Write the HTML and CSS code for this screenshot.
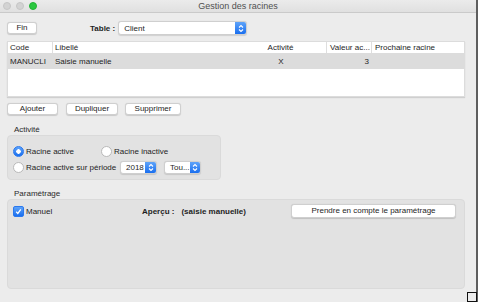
FILE: index.html
```html
<!DOCTYPE html>
<html lang="fr">
<head>
    <meta charset="UTF-8">
    <title>Gestion des racines</title>
    <link rel="stylesheet" href="styles.css">
</head>
<body>
    <div class="window">
        <div class="titlebar">
            <div class="lights">
                <span class="light"></span>
                <span class="light"></span>
                <span class="light green"></span>
            </div>
            <div class="title">Gestion des racines</div>
            <div></div>
        </div>

        <div class="content">
            <div class="toolbar">
                <button class="btn btn-fin">Fin</button>
                <span class="table-label">Table :</span>
                <div class="select select-table">
                    <span class="select-text">Client</span>
                    <span class="stepper">
                        <svg width="6" height="9" viewBox="0 0 6 9"><path d="M1 3.5 L3 1.5 L5 3.5 M1 5.5 L3 7.5 L5 5.5" fill="none" stroke="#fff" stroke-width="1.1"/></svg>
                    </span>
                </div>
            </div>

            <div class="grid">
                <div class="grid-row grid-head">
                    <div class="cell sep">Code</div>
                    <div class="cell">Libellé</div>
                    <div class="cell center sep">Activité</div>
                    <div class="cell sep">Valeur ac...</div>
                    <div class="cell">Prochaine racine</div>
                </div>
                <div class="grid-row grid-line selected">
                    <div class="cell">MANUCLI</div>
                    <div class="cell">Saisie manuelle</div>
                    <div class="cell center">X</div>
                    <div class="cell right">3</div>
                    <div class="cell"></div>
                </div>
            </div>

            <div class="actions">
                <button class="btn btn-add">Ajouter</button>
                <button class="btn btn-dup">Dupliquer</button>
                <button class="btn btn-del">Supprimer</button>
            </div>

            <div class="group-label">Activité</div>
            <div class="group group-activite">
                <div class="radio-row">
                    <label class="radio-item first">
                        <span class="radio checked"></span>
                        <span>Racine active</span>
                    </label>
                    <label class="radio-item">
                        <span class="radio"></span>
                        <span>Racine inactive</span>
                    </label>
                </div>
                <div class="radio-row">
                    <label class="radio-item period">
                        <span class="radio"></span>
                        <span>Racine active sur période</span>
                    </label>
                    <div class="select select-small">
                        <span class="select-text">2018</span>
                        <span class="stepper">
                            <svg width="6" height="9" viewBox="0 0 6 9"><path d="M1 3.5 L3 1.5 L5 3.5 M1 5.5 L3 7.5 L5 5.5" fill="none" stroke="#fff" stroke-width="1.1"/></svg>
                        </span>
                    </div>
                    <div class="select select-small">
                        <span class="select-text">Tou...</span>
                        <span class="stepper">
                            <svg width="6" height="9" viewBox="0 0 6 9"><path d="M1 3.5 L3 1.5 L5 3.5 M1 5.5 L3 7.5 L5 5.5" fill="none" stroke="#fff" stroke-width="1.1"/></svg>
                        </span>
                    </div>
                </div>
            </div>

            <div class="group-label">Paramétrage</div>
            <div class="group group-param">
                <div class="param-row">
                    <label class="check-item">
                        <span class="checkbox">
                            <svg width="9" height="9" viewBox="0 0 9 9"><path d="M2.2 4.8 L3.8 6.4 L6.8 2.4" fill="none" stroke="#fff" stroke-width="1.3"/></svg>
                        </span>
                        <span>Manuel</span>
                    </label>
                    <span class="bold">Aperçu :</span>
                    <span class="bold preview">(saisie manuelle)</span>
                    <button class="btn btn-apply">Prendre en compte le paramétrage</button>
                </div>
            </div>
        </div>

        <div class="resize-box"></div>
    </div>
</body>
</html>
```

FILE: styles.css
```css
body {
    margin: 0;
    font-family: "Liberation Sans", Arial, sans-serif;
    font-size: 8px;
    color: #1e1e1e;
    background: #ffffff;
}
.window {
    position: relative;
    width: 476px;
    height: 302px;
    background: #ececec;
    border-right: 2px solid #5e5e5e;
}
.titlebar {
    height: 12px;
    display: grid;
    grid-template-columns: 1fr auto 1fr;
    align-items: center;
    background: linear-gradient(#ebebeb, #e0e0e0);
    border-bottom: 1px solid #cacaca;
}
.lights {
    display: flex;
    gap: 5px;
    padding-left: 3px;
}
.light {
    width: 8px;
    height: 8px;
    border-radius: 50%;
    background: #d3d3d3;
    box-sizing: border-box;
    border: 1px solid #c6c6c6;
}
.light.green {
    background: #2bc840;
    border-color: #22b335;
}
.title {
    font-size: 9px;
    color: #505050;
}
.content {
    padding: 8px 11px 0 7px;
}
.toolbar {
    display: flex;
    align-items: center;
    height: 14px;
}
.btn {
    font-family: "Liberation Sans", Arial, sans-serif;
    font-size: 8px;
    color: #1e1e1e;
    height: 12px;
    padding: 0;
    background: #ffffff;
    border: 1px solid #cfcfcf;
    border-radius: 3px;
    box-shadow: 0 0.5px 1px rgba(0, 0, 0, 0.15);
    line-height: 10px;
}
.btn-fin {
    width: 30px;
}
.table-label {
    font-weight: bold;
    margin-left: 53px;
    margin-right: 3px;
}
.select {
    display: flex;
    align-items: center;
    box-sizing: border-box;
    background: #ffffff;
    border: 1px solid #cfcfcf;
    border-radius: 3px;
    box-shadow: 0 0.5px 1px rgba(0, 0, 0, 0.12);
    overflow: hidden;
}
.select-text {
    flex: 1;
    padding-left: 5px;
}
.stepper {
    display: flex;
    align-items: center;
    justify-content: center;
    width: 11px;
    align-self: stretch;
    background: linear-gradient(#5ea3f9, #1a6fef);
}
.select-table {
    width: 129px;
    height: 14px;
}
.grid {
    margin-top: 6px;
    height: 56px;
    box-sizing: border-box;
    background: #ffffff;
    border: 1px solid #dcdcdc;
    box-shadow: 0 1px 1px rgba(0, 0, 0, 0.12);
}
.grid-row {
    display: grid;
    grid-template-columns: 45px 183px 91px 45px 1fr;
    align-items: center;
}
.grid-head {
    height: 11px;
}
.grid-line {
    height: 16px;
}
.selected {
    background: #dcdcdc;
}
.cell {
    padding: 0 3px 0 2px;
    white-space: nowrap;
    overflow: hidden;
    height: 100%;
    display: flex;
    align-items: center;
}
.grid-head .cell:nth-child(4),
.grid-head .cell:nth-child(5) {
    padding-left: 3px;
}
.sep {
    border-right: 1px solid #dedede;
}
.center {
    justify-content: center;
}
.right {
    justify-content: flex-end;
}
.actions {
    display: flex;
    margin-top: 6px;
}
.btn-add {
    width: 51px;
}
.btn-dup {
    width: 52px;
    margin-left: 8px;
}
.btn-del {
    width: 56px;
    margin-left: 7px;
}
.group-label {
    padding-left: 7px;
    height: 10px;
    line-height: 10px;
    color: #2a2a2a;
}
.actions + .group-label {
    margin-top: 10px;
}
.group {
    box-sizing: border-box;
    background: #e2e2e2;
    border: 1px solid #dadada;
    border-radius: 4px;
}
.group-activite {
    width: 214px;
    height: 45px;
    padding: 9px 5px 0;
    display: flex;
    flex-direction: column;
    gap: 4px;
}
.group-activite + .group-label {
    margin-top: 9px;
}
.radio-row {
    display: flex;
    align-items: center;
}
.radio-row:first-child {
    height: 12px;
}
.radio-row:last-child {
    height: 13px;
}
.radio-item {
    display: flex;
    align-items: center;
    gap: 2px;
}
.radio-item.first {
    width: 88px;
}
.radio-item.period {
    width: 107px;
}
.radio {
    width: 11px;
    height: 11px;
    box-sizing: border-box;
    border-radius: 50%;
    background: #ffffff;
    border: 1px solid #b9b9b9;
}
.radio.checked {
    background: radial-gradient(circle, #ffffff 0 2px, transparent 2.5px), linear-gradient(#5ea3f9, #1a6fef);
    border-color: #2a78ee;
}
.select-small {
    width: 37px;
    height: 13px;
    margin-right: 7px;
}
.group-param {
    height: 90px;
    padding: 4px 8px 0 5px;
}
.param-row {
    display: flex;
    align-items: center;
    height: 14px;
}
.check-item {
    display: flex;
    align-items: center;
    gap: 2px;
    width: 129px;
}
.checkbox {
    width: 11px;
    height: 11px;
    box-sizing: border-box;
    border-radius: 2px;
    background: linear-gradient(#5ea3f9, #1a6fef);
    border: 1px solid #2a78ee;
    display: flex;
    align-items: center;
    justify-content: center;
}
.bold {
    font-weight: bold;
}
.preview {
    margin-left: 7px;
}
.btn-apply {
    width: 165px;
    height: 14px;
    margin-left: auto;
}
.resize-box {
    position: absolute;
    right: -1px;
    bottom: 0;
    width: 10px;
    height: 10px;
    box-sizing: border-box;
    border: 1.5px solid #111111;
    background: #ececec;
}
```
